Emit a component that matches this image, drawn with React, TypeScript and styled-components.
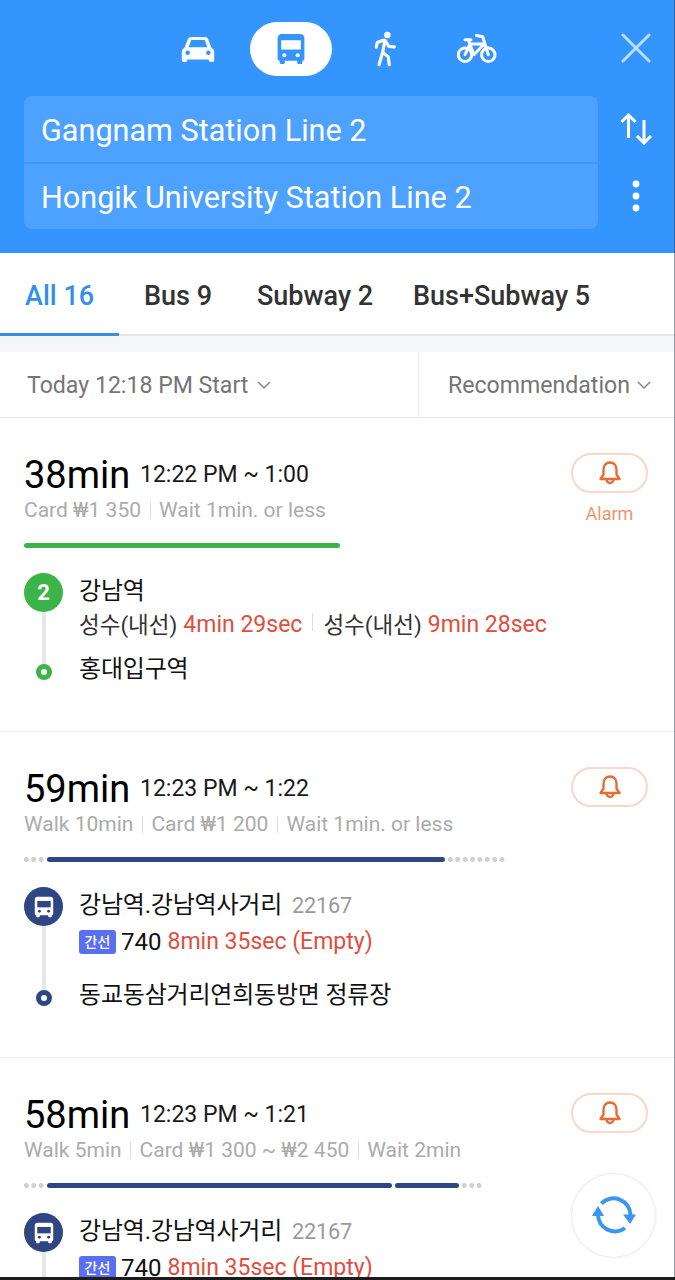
import React from 'react';
import styled, { createGlobalStyle } from 'styled-components';

const Global = createGlobalStyle`
  html, body { margin: 0; padding: 0; background: #fff; }
  body { font-family: Roboto, "Noto Sans CJK KR", sans-serif; }
  * { box-sizing: border-box; }
`;
const Page = styled.div`
  position: relative; width: 675px; height: 1280px; overflow: hidden; background: #fff;
`;
const Header = styled.header`
  height: 253px; background: #3595fe; padding: 22px 0 0 24px; display: flex; flex-direction: column;
`;
const ModeRow = styled.div`
  height: 54px; display: flex; align-items: center; padding-left: 141px; position: relative;
`;
const ModeIcon = styled.div<{ $active?: boolean; $w: number; $pr?: number; $pl?: number }>`
  width: ${p => p.$w}px; height: 54px; display: flex; align-items: center; justify-content: center;
  padding-right: ${p => p.$pr ?? 0}px; padding-left: ${p => p.$pl ?? 0}px;
  border-radius: 27px; background: ${p => (p.$active ? '#fff' : 'transparent')};
`;
const CloseBtn = styled.div`
  position: absolute; left: 596px; top: 10px; width: 32px; height: 32px; display: flex;
`;
const SearchRow = styled.div`
  margin-top: 20px; display: flex; align-items: stretch;
`;
const SearchBox = styled.div`
  width: 574px; height: 133px; border-radius: 8px; background: #4da1ff; display: flex; flex-direction: column;
`;
const SearchField = styled.div`
  flex: 1; display: flex; align-items: center; padding: 3px 0 0 17px; color: #fff; font-size: 30.6px;
  & + & { border-top: 2px solid #3e98fb; }
`;
const SideIcons = styled.div`
  width: 76px; display: flex; flex-direction: column; align-items: center; justify-content: space-between; padding: 17px 0 17px;
`;
const Tabs = styled.nav`
  height: 83px; display: flex; border-bottom: 2px solid #e6e7e9; background: #fff;
`;
const Tab = styled.div<{ $active?: boolean; $w: number; $pl: number }>`
  width: ${p => p.$w}px; padding-left: ${p => p.$pl}px; display: flex; align-items: center;
  font-size: 27px; font-weight: 500; height: 83px; padding-top: 5px;
  color: ${p => (p.$active ? '#338fe8' : '#333')};
  border-bottom: 3px solid ${p => (p.$active ? '#338fe8' : 'transparent')};
`;
const Gap = styled.div`
  height: 16px; background: #f4f6f8;
`;
const FilterRow = styled.div`
  height: 66px; display: flex; border-bottom: 1px solid #e6e7e9; color: #757575; font-size: 23.100px;
`;
const FilterLeft = styled.div`
  width: 419px; border-right: 1px solid #eceded; padding: 2px 0 0 27px; display: flex; align-items: center; gap: 9px;
`;
const FilterRight = styled.div`
  flex: 1; padding: 2px 0 0 29px; display: flex; align-items: center; gap: 7px;
`;
const Card = styled.section<{ $h: number }>`
  height: ${p => p.$h}px; padding: 31px 27px 0 24px; border-bottom: 1px solid #eceded; position: relative; overflow: hidden;
`;
const CardTop = styled.div`
  display: flex; justify-content: space-between;
`;
const CardInfo = styled.div`
  display: flex; flex-direction: column;
`;
const TimeLine = styled.div`
  display: flex; align-items: center; height: 52px; line-height: 52px;
`;
const Duration = styled.span`
  font-size: 38px; color: #000; width: 116px;
`;
const Range = styled.span`
  font-size: 23px; color: #1a1a1a;
`;
const Meta = styled.div`
  margin-top: -4px; display: flex; align-items: center; font-size: 21px; color: #ababab; height: 26px;
`;
const MetaItem = styled.span`
  & + &::before {
    content: ''; display: inline-block; width: 1px; height: 17px; background: #ddd; margin: 0 8.500px; vertical-align: -2px;
  }
`;
const AlarmCol = styled.div`
  display: flex; flex-direction: column; align-items: center; margin-top: 4px; width: 77px;
`;
const AlarmBtn = styled.div`
  width: 77px; height: 40px; border: 2px solid #f9d8cb; border-radius: 20px; display: flex; align-items: center; justify-content: center;
`;
const AlarmText = styled.div`
  margin-top: 10px; font-size: 18px; color: #f0936c; line-height: 21px;
`;
const Bar = styled.div`
  margin-top: 20px; height: 5px; display: flex; align-items: center; gap: 3px;
`;
const Seg = styled.div<{ $w: number; $c: string }>`
  width: ${p => p.$w}px; height: 5px; border-radius: 2.5px; background: ${p => p.$c};
`;
const Dots = styled.div<{ $n: number }>`
  width: ${p => p.$n * 7.400 - 1.900}px; height: 5px; flex: none;
  background-image: radial-gradient(circle at 2.5px 2.5px, #d0d0d0 2.4px, transparent 2.6px);
  background-size: 7.400px 5px;
`;
const Steps = styled.div`
  margin-top: 25px; display: grid; grid-template-columns: 55px 1fr; position: relative;
`;
const Rail = styled.div`
  position: absolute; left: 18px; top: 30px; bottom: 8px; width: 4px; background: #e6e7e9;
`;
const Badge = styled.div<{ $c: string }>`
  width: 39px; height: 39px; border-radius: 50%; background: ${p => p.$c}; color: #fff; display: flex; align-items: center; justify-content: center;
  font-size: 22px; font-weight: 700; position: relative; z-index: 1;
`;
const StopDot = styled.div<{ $c: string }>`
  width: 16px; height: 16px; margin: 0 0 0 12px; border-radius: 50%; border: 5px solid ${p => p.$c}; background: #fff; position: relative; z-index: 1;
`;
const StepBody = styled.div`
  min-width: 0; padding-top: 1px;
`;
const StationName = styled.div`
  font-size: 24px; color: #111; line-height: 34px; display: flex; align-items: baseline; gap: 10px; letter-spacing: -0.2px;
`;
const StopId = styled.span`
  font-size: 21.700px; color: #9a9a9a;
`;
const ArrivalLine = styled.div<{ $tag?: boolean }>`
  margin-top: ${p => (p.$tag ? 2 : 0)}px; font-size: 22.500px; color: #333; line-height: 34px; display: flex; align-items: center; white-space: nowrap;
`;
const Red = styled.span`
  color: #e04e3e; margin-left: 6px; font-size: 23px;
`;
const Divider = styled.span`
  width: 1px; height: 18px; background: #ddd; margin: 5px 10px 0; align-self: flex-start;
`;
const RouteTag = styled.span`
  width: 37px; height: 24px; border-radius: 3px; background: #5a6ff0; color: #fff; font-size: 14px; font-weight: 500; display: flex; align-items: center; justify-content: center; margin-right: 5px;
`;
const RouteNo = styled.span`
  color: #111; font-size: 24px;
`;
const Spacer = styled.div<{ $h: number }>`
  height: ${p => p.$h}px; grid-column: 1 / 3;
`;
const EndName = styled(StationName)`
  margin-top: -12px;
`;
const Refresh = styled.div`
  position: absolute; left: 572px; top: 1174px; width: 83px; height: 83px; border-radius: 50%; background: #fff;
  box-shadow: 0 0 3px rgba(0,0,0,.18); display: flex; align-items: center; justify-content: center;
`;
const BottomEdge = styled.div`
  position: absolute; left: 0; right: 0; bottom: 0; height: 3px; background: #1c1c1c;
`;
const RightEdge = styled.div`
  position: absolute; top: 0; right: 0; bottom: 0; width: 1px; background: rgba(40,40,60,.45);
`;

const BusGlyph = ({ size, c, hole }: { size: number; c: string; hole: string }) => (
  <svg width={size} height={size} viewBox="1 1 30 31">
    <path fill={c} d="M7 2h18a4 4 0 0 1 4 4v20a2 2 0 0 1-2 2v1.500a1.500 1.500 0 0 1-1.500 1.500h-2a1.500 1.500 0 0 1-1.500-1.500V28H10v1.500A1.500 1.500 0 0 1 8.500 31h-2A1.500 1.500 0 0 1 5 29.500V28a2 2 0 0 1-2-2V6a4 4 0 0 1 4-4z" />
    <rect x="6.500" y="8" width="19" height="9" fill={hole} />
    <circle cx="9.500" cy="22.500" r="2" fill={hole} />
    <circle cx="22.500" cy="22.500" r="2" fill={hole} />
  </svg>
);
const Bell = () => (
  <svg width="24" height="26" viewBox="0 0 24 26" fill="none" stroke="#ea6a34" strokeWidth="2.400" strokeLinejoin="round">
    <path d="M12 2.500c-4 0-6.500 3-6.500 7v5L2.500 19h19l-3-4.500v-5c0-4-2.500-7-6.500-7z" />
    <path d="M8.500 19.500a3.500 3.500 0 0 0 7 0" />
  </svg>
);
const Chevron = () => (
  <svg width="14" height="9" viewBox="0 0 14 9" fill="none" stroke="#888" strokeWidth="1.500"><path d="M1 1l6 6 6-6" /></svg>
);

type Leg = { w?: number; n?: number; c?: string };
const Route = ({ dur, range, meta, legs }: { dur: string; range: string; meta: string[]; legs: Leg[] }) => (
  <>
    <TimeLine><Duration>{dur}</Duration><Range>{range}</Range></TimeLine>
    <Meta>{meta.map(m => <MetaItem key={m}>{m}</MetaItem>)}</Meta>
    <Bar>{legs.map((l, i) => (l.n ? <Dots key={i} $n={l.n} /> : <Seg key={i} $w={l.w!} $c={l.c!} />))}</Bar>
  </>
);
const NAVY = '#2f4684';
const BusSteps = ({ end }: { end?: string }) => (
  <Steps>
    <Rail />
    <Badge $c={NAVY}><BusGlyph size={22} c="#fff" hole={NAVY} /></Badge>
    <StepBody>
      <StationName>강남역.강남역사거리 <StopId>22167</StopId></StationName>
      <ArrivalLine $tag><RouteTag>간선</RouteTag><RouteNo>740</RouteNo><Red>8min 35sec (Empty)</Red></ArrivalLine>
    </StepBody>
    {end ? <>
      <Spacer $h={31} />
      <StopDot $c={NAVY} />
      <EndName>{end}</EndName>
    </> : <Spacer $h={60} />}
  </Steps>
);

export default function App() {
  return (
    <Page>
      <Global />
      <Header>
        <ModeRow>
          <ModeIcon $w={85} $pr={20}>
            <svg width="34" height="27" viewBox="0 0 36 30"><path fill="#fff" fillRule="evenodd" d="M10 1h16c1.500 0 2.700.9 3.200 2.300L33 13c1.600 1 3 2.300 3 4.500V27a2 2 0 0 1-2 2h-2a2 2 0 0 1-2-2v-1H6v1a2 2 0 0 1-2 2H2a2 2 0 0 1-2-2v-9.500C0 15.300 1.400 14 3 13l3.800-9.700C7.300 1.900 8.500 1 10 1zM10.500 4.500L7.500 12.500h21l-3-8zM6.500 16a2.500 2.500 0 1 0 0 5 2.500 2.500 0 0 0 0-5zM29.500 16a2.500 2.500 0 1 0 0 5 2.500 2.500 0 0 0 0-5z" /></svg>
          </ModeIcon>
          <ModeIcon $w={82} $active>
            <BusGlyph size={32} c="#3595fe" hole="#fff" />
          </ModeIcon>
          <ModeIcon $w={104} $pl={4}>
            <svg width="24" height="36" viewBox="0 0 26 38"><circle cx="14.500" cy="3.800" r="3.500" fill="#fff" /><path fill="none" stroke="#fff" strokeWidth="3.400" strokeLinejoin="round" strokeLinecap="round" d="M2.500 17l1-5 6.500-2.500 2 .2 4 6.500 6 .5M11.500 11l-2 11-4 14M10 23l5.500 4.500 1 8.500" /></svg>
          </ModeIcon>
          <ModeIcon $w={85} $pr={4}>
            <svg width="40" height="30" viewBox="0 0 40 30" fill="none" stroke="#fff" strokeWidth="3" strokeLinejoin="round" strokeLinecap="round">
              <circle cx="8" cy="20.700" r="6.700" /><circle cx="31.300" cy="20.700" r="6.700" />
              <path d="M19.500 1.500l6.200 1.200 5.600 18M8 5.700h6M11.300 5.700L17 20.700 27 10H13L8 20.700" />
            </svg>
          </ModeIcon>
          <CloseBtn>
            <svg width="32" height="32" viewBox="0 0 32 32" stroke="#bcdcfd" strokeWidth="3" strokeLinecap="round" fill="none"><path d="M3 3l26 26M29 3L3 29" /></svg>
          </CloseBtn>
        </ModeRow>
        <SearchRow>
          <SearchBox>
            <SearchField>Gangnam Station Line 2</SearchField>
            <SearchField>Hongik University Station Line 2</SearchField>
          </SearchBox>
          <SideIcons>
            <svg width="32" height="32" viewBox="0 0 32 32" fill="none" stroke="#fff" strokeWidth="3"><path d="M8.500 25V2M1.500 9l7-7 7 7M24 7v23M17 23l7 7 7-7" /></svg>
            <svg width="10" height="32" viewBox="0 0 10 32" fill="#fff"><circle cx="5" cy="4" r="3.400" /><circle cx="5" cy="16" r="3.400" /><circle cx="5" cy="28" r="3.400" /></svg>
          </SideIcons>
        </SearchRow>
      </Header>
      <Tabs>
        <Tab $active $w={119} $pl={25}>All 16</Tab>
        <Tab $w={138} $pl={25}>Bus 9</Tab>
        <Tab $w={156} $pl={0}>Subway 2</Tab>
        <Tab $w={230} $pl={0}>Bus+Subway 5</Tab>
      </Tabs>
      <Gap />
      <FilterRow>
        <FilterLeft>Today 12:18 PM Start <Chevron /></FilterLeft>
        <FilterRight>Recommendation <Chevron /></FilterRight>
      </FilterRow>
      <Card $h={314}>
        <CardTop>
          <CardInfo>
            <Route dur="38min" range="12:22 PM ~ 1:00" meta={['Card ₩1 350', 'Wait 1min. or less']} legs={[{ w: 316, c: '#3cb44a' }]} />
          </CardInfo>
          <AlarmCol><AlarmBtn><Bell /></AlarmBtn><AlarmText>Alarm</AlarmText></AlarmCol>
        </CardTop>
        <Steps>
          <Rail />
          <Badge $c="#3cb44a">2</Badge>
          <StepBody>
            <StationName>강남역</StationName>
            <ArrivalLine>성수(내선)<Red>4min 29sec</Red><Divider />성수(내선)<Red>9min 28sec</Red></ArrivalLine>
          </StepBody>
          <Spacer $h={22} />
          <StopDot $c="#3cb44a" />
          <EndName>홍대입구역</EndName>
        </Steps>
      </Card>
      <Card $h={326}>
        <CardTop>
          <CardInfo>
            <Route dur="59min" range="12:23 PM ~ 1:22" meta={['Walk 10min', 'Card ₩1 200', 'Wait 1min. or less']} legs={[{ n: 3 }, { w: 398, c: NAVY }, { n: 8 }]} />
          </CardInfo>
          <AlarmCol><AlarmBtn><Bell /></AlarmBtn></AlarmCol>
        </CardTop>
        <BusSteps end="동교동삼거리연희동방면 정류장" />
      </Card>
      <Card $h={222}>
        <CardTop>
          <CardInfo>
            <Route dur="58min" range="12:23 PM ~ 1:21" meta={['Walk 5min', 'Card ₩1 300 ~ ₩2 450', 'Wait 2min']} legs={[{ n: 3 }, { w: 345, c: NAVY }, { w: 64, c: NAVY }, { n: 3 }]} />
          </CardInfo>
          <AlarmCol><AlarmBtn><Bell /></AlarmBtn></AlarmCol>
        </CardTop>
        <BusSteps />
      </Card>
      <Refresh>
        <svg width="44" height="40" viewBox="0 0 44 40" fill="none" stroke="#3b96f0" strokeWidth="4">
          <path d="M9.300 7.500A17 17 0 0 1 38.500 19" /><path d="M33 32A17 17 0 0 1 6 19" />
          <path fill="#3b96f0" stroke="none" d="M31 18.500h13L38 28zM0 20h12l-6-10z" />
        </svg>
      </Refresh>
      <RightEdge />
      <BottomEdge />
    </Page>
  );
}
